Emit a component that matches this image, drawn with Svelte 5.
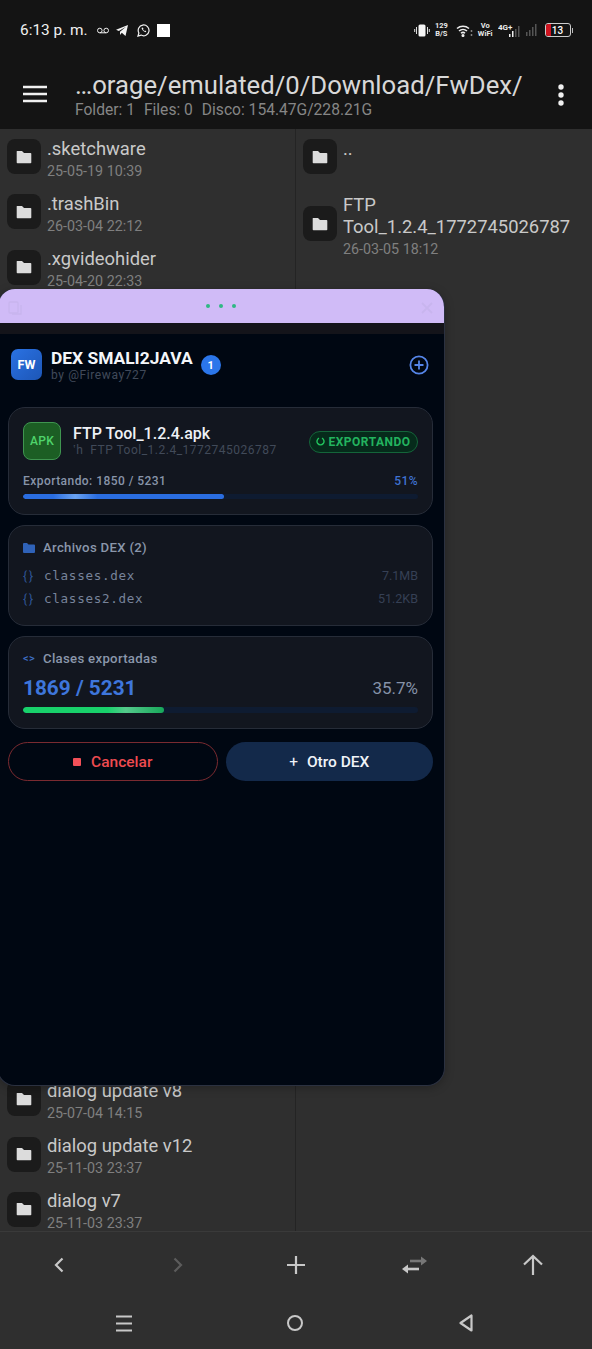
<script>
	const leftTop = [
		{ name: '.sketchware', date: '25-05-19 10:39' },
		{ name: '.trashBin', date: '26-03-04 22:12' },
		{ name: '.xgvideohider', date: '25-04-20 22:33' }
	];
	const leftBottom = [
		{ name: 'dialog update v8', date: '25-07-04 14:15' },
		{ name: 'dialog update v12', date: '25-11-03 23:37' },
		{ name: 'dialog v7', date: '25-11-03 23:37' }
	];
	const dexFiles = [
		{ name: 'classes.dex', size: '7.1MB' },
		{ name: 'classes2.dex', size: '51.2KB' }
	];
	const exportPct = 51;
	const classPct = 35.7;
</script>

{#snippet folderIcon()}
	<span class="folder-box">
		<svg width="16" height="14" viewBox="0 0 16 14"><path d="M1 1h5l2 2h6.500a.8.8 0 0 1 .8.8v8.700a.8.8 0 0 1-.8.8H1.500a.8.8 0 0 1-.8-.8V1.800A.8.8 0 0 1 1 1z" fill="#dcdcdc" /></svg>
	</span>
{/snippet}

{#snippet row(item)}
	<div class="row">
		{@render folderIcon()}
		<div class="row-text">
			<div class="row-name">{item.name}</div>
			<div class="row-date">{item.date}</div>
		</div>
	</div>
{/snippet}

<div class="screen">
	<header class="top">
		<div class="status">
			<div class="status-left">
				<span class="clock">6:13 p. m.</span>
				<svg width="12" height="8" viewBox="0 0 12 8" fill="none" stroke="#eee" stroke-width="1"><circle cx="2.800" cy="4.500" r="2.300" /><circle cx="9.200" cy="4.500" r="2.300" /><path d="M2.800 6.800h6.400" /></svg>
				<svg width="12" height="11" viewBox="0 0 12 11"><path d="M12 0 9.500 11 5.800 7.800 4 10V6.800L10 1.800 2.800 6 0 4.800z" fill="#f2f2f2" /></svg>
				<svg class="wa" width="13" height="13" viewBox="0 0 13 13" fill="none"><path d="M1 12l.9-3A5.400 5.400 0 1 1 4 11.100z" stroke="#f2f2f2" stroke-width="1.200" /><path d="M4.500 4c.8 2.200 2 3.500 4 4.300l.8-1-1.300-.8-.6.500C6.800 6.500 6.300 6 6 5.300l.5-.6L5.700 3.400z" fill="#f2f2f2" /></svg>
				<span class="white-sq"></span>
			</div>
			<div class="status-right">
				<svg width="16" height="13" viewBox="0 0 16 13"><rect x="4.500" y="0.500" width="7" height="12" rx="1.500" fill="#f5f5f5" /><path d="M2.500 3v7M0.700 5v3M13.500 3v7M15.300 5v3" stroke="#ddd" stroke-width="1" /></svg>
				<span class="speed">129<br />B/S</span>
				<svg class="wifi" width="17" height="13" viewBox="0 0 17 13" fill="none" stroke="#eee" stroke-width="1.500"><path d="M1 4.500a9 9 0 0 1 12 0M3 7a6 6 0 0 1 8 0M5 9.300a3 3 0 0 1 4 0" /><circle cx="7" cy="11.500" r="0.800" fill="#eee" /><path d="M15.500 6.500v1M15.500 10.500v1" /></svg>
				<span class="speed">Vo<br />WiFi</span>
				<svg width="22" height="14" viewBox="0 0 22 14"><text x="0" y="7" font-size="8" font-family="Roboto" font-weight="700" fill="#eee">4G+</text><rect x="11" y="11" width="1.500" height="3" fill="#eee" /><rect x="14" y="8" width="1.500" height="6" fill="#eee" /><rect x="17" y="6" width="1.500" height="8" fill="#555" /><rect x="20" y="3" width="1.500" height="11" fill="#555" /></svg>
				<svg width="13" height="12" viewBox="0 0 13 12"><rect x="1" y="8" width="1.500" height="4" fill="#555" /><rect x="4" y="6" width="1.500" height="6" fill="#555" /><rect x="7" y="3" width="1.500" height="9" fill="#555" /><rect x="10" y="0" width="1.500" height="12" fill="#555" /></svg>
				<span class="battery"><i></i><b>13</b></span>
				<span class="battery-tip"></span>
			</div>
		</div>
		<div class="toolbar">
			<svg class="menu" width="24" height="18" viewBox="0 0 24 18"><path d="M0 2h24M0 9h24M0 16h24" stroke="#f0f0f0" stroke-width="2.400" /></svg>
			<div class="path-block">
				<div class="path">…orage/emulated/0/Download/FwDex/</div>
				<div class="path-sub"><span>Folder: 1</span><span>Files: 0</span><span>Disco: 154.47G/228.21G</span></div>
			</div>
			<svg class="more" width="6" height="22" viewBox="0 0 6 22" fill="#f0f0f0"><circle cx="3" cy="3" r="2.700" /><circle cx="3" cy="11" r="2.700" /><circle cx="3" cy="19" r="2.700" /></svg>
		</div>
	</header>

	<main class="panes">
		<section class="pane left">
			<div class="group">
				{#each leftTop as item}{@render row(item)}{/each}
			</div>
			<div class="group tail">
				{#each leftBottom as item}{@render row(item)}{/each}
			</div>
		</section>
		<section class="pane right">
			<div class="group">
				<div class="row">
					{@render folderIcon()}
					<div class="row-text"><div class="row-name dots">..</div></div>
				</div>
				<div class="row tall">
					{@render folderIcon()}
					<div class="row-text">
						<div class="row-name">FTP<br />Tool_1.2.4_1772745026787</div>
						<div class="row-date">26-03-05 18:12</div>
					</div>
				</div>
			</div>
		</section>
	</main>

	<footer class="bottom">
		<div class="tools">
			<svg width="12" height="16" viewBox="0 0 12 16" fill="none" stroke="#c8c8c8" stroke-width="2.200"><path d="M9.500 1.500 3 8l6.500 6.500" /></svg>
			<svg width="12" height="16" viewBox="0 0 12 16" fill="none" stroke="#5c5c5c" stroke-width="2.200"><path d="M2.500 1.500 9 8l-6.500 6.500" /></svg>
			<svg width="18" height="18" viewBox="0 0 18 18" fill="none" stroke="#c8c8c8" stroke-width="2.200"><path d="M9 0v18M0 9h18" /></svg>
			<svg width="25" height="20" viewBox="0 0 25 20"><path d="M8 6h11" stroke="#777" stroke-width="2.600" /><path d="M19 1.500l6 4.500-6 4.500z" fill="#777" /><path d="M6 14h11" stroke="#c8c8c8" stroke-width="2.600" /><path d="M6 9.500 0 14l6 4.500z" fill="#c8c8c8" /></svg>
			<svg width="20" height="21" viewBox="0 0 20 21" fill="none" stroke="#c8c8c8" stroke-width="2.200"><path d="M10 21V2M1 10.500 10 2l9 8.500" /></svg>
		</div>
		<div class="nav">
			<svg width="16" height="17" viewBox="0 0 16 17" fill="none" stroke="#c8c8c8" stroke-width="2.200"><path d="M0 1.500h16M0 8.500h16M0 15.500h16" /></svg>
			<svg width="16" height="16" viewBox="0 0 16 16" fill="none" stroke="#c8c8c8" stroke-width="2"><circle cx="8" cy="8" r="7" /></svg>
			<svg width="14" height="18" viewBox="0 0 14 18" fill="none" stroke="#c8c8c8" stroke-width="2.200"><path d="M12.500 1.500v15L1.500 9z" stroke-linejoin="round" /></svg>
		</div>
	</footer>

	<div class="window">
		<div class="title-bar">
			<svg class="copy" width="14" height="14" viewBox="0 0 14 14" fill="none" stroke="#c8b5ee" stroke-width="1.300"><rect x="1" y="1" width="9" height="11" rx="1" /><path d="M4 13h9V4" /></svg>
			<div class="dots3"><i></i><i></i><i></i></div>
			<svg class="close" width="12" height="12" viewBox="0 0 12 12" stroke="#c8b5ee" stroke-width="1.800"><path d="M1 1l10 10M11 1 1 11" /></svg>
		</div>
		<div class="band"></div>
		<div class="win-body">
			<div class="app-head">
				<div class="logo">FW</div>
				<div class="app-title">
					<div class="app-name">DEX SMALI2JAVA</div>
					<div class="app-by">by @Fireway727</div>
				</div>
				<span class="badge">1</span>
				<svg class="add" width="20" height="20" viewBox="0 0 20 20" fill="none" stroke="#5585e8" stroke-width="1.800"><circle cx="10" cy="10" r="8.600" /><path d="M10 5.500v9M5.500 10h9" /></svg>
			</div>

			<div class="card job">
				<div class="job-top">
					<div class="apk">APK</div>
					<div class="job-info">
						<div class="job-name">FTP Tool_1.2.4.apk</div>
						<div class="job-sub"><span class="hook">ʽh</span>FTP Tool_1.2.4_1772745026787</div>
					</div>
					<div class="pill">
						<svg width="9" height="9" viewBox="0 0 9 9" fill="none" stroke="#22c55e" stroke-width="1.400"><path d="M3 1.200a3.500 3.500 0 1 0 3 0" /></svg>
						EXPORTANDO
					</div>
				</div>
				<div class="prog-line"><span>Exportando: 1850 / 5231</span><span class="pct">{exportPct}%</span></div>
				<div class="track"><div class="fill blue" style="width: {exportPct}%"></div></div>
			</div>

			<div class="card dex">
				<div class="card-title">
					<svg width="12" height="10" viewBox="0 0 12 10"><path d="M0 1a1 1 0 0 1 1-1h3l1.500 1.500H11a1 1 0 0 1 1 1V9a1 1 0 0 1-1 1H1a1 1 0 0 1-1-1z" fill="#2f62b8" /></svg>
					Archivos DEX (2)
				</div>
				<div class="dex-list">
					{#each dexFiles as f}
						<div class="dex-row">
							<span class="braces">{'{}'}</span>
							<span class="dex-name">{f.name}</span>
							<span class="dex-size">{f.size}</span>
						</div>
					{/each}
				</div>
			</div>

			<div class="card classes">
				<div class="card-title"><span class="code">&lt;&gt;</span>Clases exportadas</div>
				<div class="count-line"><span class="count">1869 / 5231</span><span class="count-pct">{classPct}%</span></div>
				<div class="track"><div class="fill green" style="width: {classPct}%"></div></div>
			</div>

			<div class="actions">
				<button class="btn cancel"><i></i>Cancelar</button>
				<button class="btn other"><span>+</span>Otro DEX</button>
			</div>
		</div>
	</div>
</div>

<style>
	:global(body) {
		margin: 0;
		background: #2f2f2f;
	}

	.screen {
		position: relative;
		width: 592px;
		height: 1349px;
		display: flex;
		flex-direction: column;
		overflow: hidden;
		font-family: Roboto, 'Liberation Sans', sans-serif;
		background: #2f2f2f;
	}

	/* header */
	.top {
		height: 129px;
		flex: none;
		background: #141414;
		box-sizing: border-box;
	}

	.status {
		height: 60px;
		padding: 20px 19px 0 20px;
		box-sizing: border-box;
		display: flex;
		justify-content: space-between;
		align-items: flex-start;
	}

	.status-left,
	.status-right {
		display: flex;
		align-items: center;
		height: 20px;
	}

	.status-left {
		gap: 7px;
	}

	.clock {
		font-size: 15.400px;
		color: #f0f0f0;
		margin-right: 2px;
	}

	.wa {
		margin-left: 2px;
	}

	.white-sq {
		width: 13px;
		height: 13px;
		background: #fff;
	}

	.status-right {
		gap: 5px;
	}

	.wifi {
		margin-left: 3px;
	}

	.speed {
		font-size: 7.500px;
		line-height: 8px;
		font-weight: 700;
		color: #e8e8e8;
		text-align: center;
	}

	.battery {
		position: relative;
		width: 24px;
		height: 12px;
		border: 1px solid #ccc;
		border-radius: 3px;
		overflow: hidden;
		display: flex;
		align-items: center;
		justify-content: center;
		margin-left: 2px;
	}

	.battery i {
		position: absolute;
		left: 0;
		top: 0;
		bottom: 0;
		width: 5px;
		background: #d01420;
	}

	.battery b {
		position: relative;
		font-size: 10px;
		font-weight: 500;
		color: #fff;
	}

	.battery-tip {
		width: 1.500px;
		height: 5px;
		background: #bbb;
		margin-left: -4px;
	}

	.toolbar {
		height: 69px;
		display: flex;
		align-items: flex-start;
		padding: 0 28px 0 23px;
	}

	.menu {
		margin-top: 25px;
		flex: none;
	}

	.path-block {
		margin-left: 28px;
	}

	.path {
		font-size: 25.700px;
		line-height: 30px;
		margin-top: 10px;
		color: #d8d8d8;
		white-space: nowrap;
	}

	.path-sub {
		display: flex;
		gap: 9px;
		font-size: 15.600px;
		line-height: 18px;
		margin-top: 1px;
		color: #868686;
	}

	.more {
		margin-top: 24px;
		margin-left: auto;
	}

	/* file panes */
	.panes {
		height: 1103px;
		flex: none;
		display: flex;
		border-bottom: 1px solid #232323;
		box-sizing: border-box;
	}

	.pane {
		overflow: hidden;
		display: flex;
		flex-direction: column;
	}

	.left {
		width: 296px;
		flex: none;
		justify-content: space-between;
		border-right: 1px solid #242424;
		box-sizing: border-box;
	}

	.right {
		flex: 1;
	}

	.group {
		display: flex;
		flex-direction: column;
		flex: none;
	}

	.tail {
		margin-bottom: -6px;
	}

	.row {
		display: flex;
		align-items: center;
		height: 55.330px;
		padding-left: 7px;
		gap: 6px;
		flex: none;
	}

	.row-text {
		margin-top: 4px;
	}

	.row.tall {
		height: 81px;
		margin-top: -1px;
	}

	.folder-box {
		width: 34px;
		height: 35px;
		border-radius: 8px;
		background: #1b1b1b;
		display: flex;
		align-items: center;
		justify-content: center;
		flex: none;
	}

	.row-name {
		font-size: 18.400px;
		line-height: 22px;
		color: #c9c9c9;
		white-space: nowrap;
	}

	.dots {
		margin-top: -20px;
	}

	.row-date {
		font-size: 14.300px;
		line-height: 17px;
		margin-top: 3px;
		color: #7f7f7f;
	}

	/* bottom bars */
	.bottom {
		flex: 1;
		display: flex;
		flex-direction: column;
		border-top: 1px solid #3a3a3a;
		margin-top: -1px;
	}

	.tools {
		height: 63px;
		display: grid;
		grid-template-columns: repeat(5, 118.400px);
		place-items: center;
		align-items: center;
		padding-top: 2px;
		box-sizing: border-box;
	}

	.nav {
		height: 53px;
		display: grid;
		grid-template-columns: repeat(3, 171px);
		place-items: center;
		padding: 3px 0 0 38px;
		box-sizing: border-box;
	}

	/* floating window */
	.window {
		position: absolute;
		left: -3px;
		top: 289px;
		width: 448px;
		height: 797px;
		box-sizing: border-box;
		border: 1px solid #2b3140;
		border-top: 0;
		border-radius: 18px;
		background: #000712;
		overflow: hidden;
		display: flex;
		flex-direction: column;
		box-shadow: 0 2px 10px rgba(0, 0, 0, 0.25);
	}

	.title-bar {
		position: relative;
		height: 34px;
		flex: none;
		background: #d0bbf7;
		display: flex;
		align-items: center;
		justify-content: center;
	}

	.copy {
		position: absolute;
		left: 10px;
		top: 12px;
	}

	.close {
		position: absolute;
		right: 11px;
		top: 13px;
	}

	.dots3 {
		display: flex;
		gap: 9px;
	}

	.dots3 i {
		width: 4px;
		height: 4px;
		border-radius: 50%;
		background: #2fb884;
	}

	.band {
		height: 11px;
		flex: none;
		background: #14141a;
	}

	.win-body {
		flex: 1;
		padding: 15px 11px 0 10px;
		display: flex;
		flex-direction: column;
	}

	.app-head {
		display: flex;
		align-items: center;
		height: 31px;
		padding-left: 3px;
		margin-bottom: 27px;
	}

	.logo {
		width: 31px;
		height: 31px;
		border-radius: 7px;
		background: linear-gradient(135deg, #2a72e4, #1d56b6);
		color: #fff;
		font-size: 12.500px;
		font-weight: 700;
		display: flex;
		align-items: center;
		justify-content: center;
		flex: none;
	}

	.app-title {
		margin-left: 9px;
	}

	.app-name {
		font-size: 17.400px;
		line-height: 20px;
		font-weight: 700;
		color: #f4f6fa;
		white-space: nowrap;
	}

	.app-by {
		font-size: 12px;
		line-height: 14px;
		letter-spacing: 0.600px;
		color: #414a5a;
	}

	.badge {
		width: 20px;
		height: 20px;
		margin-left: 8px;
		border-radius: 50%;
		background: #2b76ea;
		color: #fff;
		font-size: 11px;
		font-weight: 700;
		display: flex;
		align-items: center;
		justify-content: center;
		margin-top: 1px;
	}

	.add {
		margin-left: auto;
		margin-right: 4px;
	}

	.card {
		box-sizing: border-box;
		background: #12161f;
		border: 1px solid #262c38;
		border-radius: 17px;
		padding: 14px 14px 0;
		margin-bottom: 10px;
	}

	.job {
		height: 108px;
	}

	.job-top {
		display: flex;
		align-items: center;
		height: 38px;
	}

	.apk {
		width: 38px;
		height: 38px;
		box-sizing: border-box;
		border: 1px solid #3f9550;
		border-radius: 8px;
		background: #1c5e24;
		color: #4fd46b;
		font-size: 12px;
		font-weight: 500;
		letter-spacing: 0.300px;
		display: flex;
		align-items: center;
		justify-content: center;
		flex: none;
	}

	.job-info {
		margin-left: 12px;
		flex: 1;
		min-width: 0;
	}

	.job-name {
		font-size: 16px;
		line-height: 19px;
		font-weight: 500;
		color: #eef1f6;
	}

	.job-sub {
		font-size: 12px;
		line-height: 15px;
		letter-spacing: 0.500px;
		color: #414a59;
		white-space: nowrap;
	}

	.hook {
		margin-right: 7px;
	}

	.pill {
		box-sizing: border-box;
		width: 109px;
		height: 22px;
		border: 1px solid #14653a;
		border-radius: 11px;
		background: #062b1b;
		color: #23b45f;
		font-size: 12px;
		font-weight: 700;
		letter-spacing: 0.500px;
		display: flex;
		align-items: center;
		justify-content: center;
		gap: 3px;
		flex: none;
		margin-top: 1px;
	}

	.prog-line {
		display: flex;
		justify-content: space-between;
		font-size: 12px;
		font-weight: 500;
		line-height: 14px;
		letter-spacing: 0.450px;
		color: #8894a9;
		margin-top: 14px;
	}

	.pct {
		color: #3f72d2;
	}

	.track {
		height: 5px;
		border-radius: 3px;
		background: #0e1b31;
		margin-top: 6px;
		overflow: hidden;
	}

	.fill {
		height: 100%;
		border-radius: 3px;
	}

	.blue {
		background: linear-gradient(90deg, #2a6de0 0%, #2a6de0 15%, #6aa2f0 26%, #2a6de0 37%, #2a6de0 100%);
	}

	.green {
		background: linear-gradient(90deg, #18d16b 0%, #18d16b 60%, #55c98c 73%, #17a85a 100%);
	}

	.dex {
		height: 101px;
	}

	.card-title {
		display: flex;
		align-items: center;
		gap: 8px;
		font-size: 13.200px;
		font-weight: 500;
		line-height: 16px;
		letter-spacing: 0.300px;
		color: #8a96ab;
	}

	.dex-list {
		margin-top: 8px;
	}

	.dex-row {
		display: flex;
		align-items: center;
		height: 23px;
	}

	.braces {
		width: 21px;
		font-size: 12px;
		letter-spacing: 2px;
		color: #2f5596;
		flex: none;
	}

	.dex-name {
		font-family: 'DejaVu Sans Mono', monospace;
		font-size: 12.600px;
		letter-spacing: 0.700px;
		color: #77839a;
	}

	.dex-size {
		margin-left: auto;
		font-size: 12.500px;
		color: #364055;
	}

	.classes {
		height: 93px;
	}

	.code {
		color: #3f6fc4;
		font-size: 11px;
		width: 12px;
	}

	.count-line {
		display: flex;
		justify-content: space-between;
		align-items: center;
		height: 28px;
		margin-top: 7px;
	}

	.count {
		font-size: 20.800px;
		font-weight: 700;
		color: #3e76dc;
	}

	.count-pct {
		font-size: 17px;
		color: #8592a8;
	}

	.classes .track {
		margin-top: 5px;
		height: 6px;
	}

	.actions {
		display: flex;
		gap: 8px;
		margin-top: 3px;
	}

	.btn {
		flex: 1;
		height: 39px;
		border-radius: 20px;
		font-family: inherit;
		font-size: 15.500px;
		font-weight: 500;
		display: flex;
		align-items: center;
		justify-content: center;
		box-sizing: border-box;
	}

	.cancel {
		background: transparent;
		border: 1px solid #7a2a30;
		color: #ee4b50;
		gap: 10px;
	}

	.cancel i {
		width: 8px;
		height: 8px;
		border-radius: 1px;
		background: #f25058;
	}

	.other {
		background: #13294a;
		border: 0;
		color: #f0f3f8;
		gap: 9px;
	}

	.other span {
		font-weight: 400;
	}
</style>
